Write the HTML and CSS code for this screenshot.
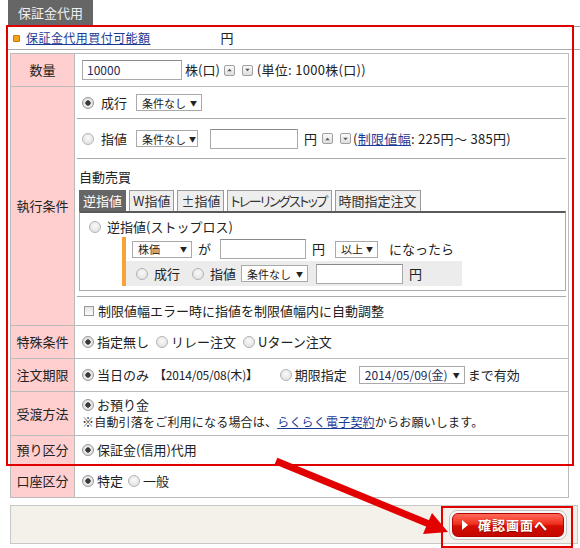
FILE: index.html
```html
<!DOCTYPE html>
<html lang="ja">
<head>
<meta charset="utf-8">
<title>保証金代用</title>
<link rel="stylesheet" href="styles.css">
</head>
<body>
<div class="page">
  <div class="tabbar"><span class="tab">保証金代用</span></div>
  <div class="panel">
    <div class="avail">
      <span class="bullet"></span><a href="#" class="link avail-link">保証金代用買付可能額</a><span class="avail-yen">円</span>
    </div>
    <table class="form">
      <tr>
        <th>数量</th>
        <td>
          <div class="line h32">
            <span class="input qty">10000</span><span class="unit">株(口)</span>
            <span class="spin sp1"><svg viewBox="0 0 10 10" width="10" height="10"><path d="M2.5 6.5 L5 3.5 L7.5 6.5Z" fill="#555"/></svg></span>
            <span class="spin sp2"><svg viewBox="0 0 10 10" width="10" height="10"><path d="M2.5 3.5 L5 6.5 L7.5 3.5Z" fill="#555"/></svg></span>
            <span class="note-unit">(単位: 1000株(口))</span>
          </div>
        </td>
      </tr>
      <tr>
        <th>執行条件</th>
        <td class="exec">
          <div class="erow e1">
            <span class="radio on"></span><span class="rlabel">成行</span>
            <span class="sel s-cond">条件なし<i>▼</i></span>
          </div>
          <div class="erow e2">
            <span class="radio"></span><span class="rlabel">指値</span>
            <span class="sel s-cond2">条件なし<i>▼</i></span>
            <span class="input price"></span><span class="yen">円</span>
            <span class="spin sp3"><svg viewBox="0 0 10 10" width="10" height="10"><path d="M2.5 6.5 L5 3.5 L7.5 6.5Z" fill="#555"/></svg></span>
            <span class="spin sp2"><svg viewBox="0 0 10 10" width="10" height="10"><path d="M2.5 3.5 L5 6.5 L7.5 3.5Z" fill="#555"/></svg></span>
            <span class="range">(<a href="#" class="link">制限値幅</a>: 225円～ 385円)</span>
          </div>
          <div class="auto">
            <div class="auto-title">自動売買</div>
            <div class="stabs">
              <span class="stab active">逆指値</span>
              <span class="stab">W指値</span>
              <span class="stab">±指値</span>
              <span class="stab trail">トレーリングストップ</span>
              <span class="stab">時間指定注文</span>
            </div>
            <div class="tabbox">
              <div class="stop"><span class="radio"></span><span class="stop-label">逆指値(ストップロス)</span></div>
              <div class="cond">
                <div class="cond-r1">
                  <span class="sel s-kabu">株価<i>▼</i></span>
                  <span class="ga">が</span>
                  <span class="input trig"></span>
                  <span class="yen2">円</span>
                  <span class="sel s-ijo">以上<i>▼</i></span>
                  <span class="natta">になったら</span>
                </div>
                <div class="cond-r2">
                  <span class="radio"></span><span class="rl2">成行</span>
                  <span class="radio r2b"></span><span class="rl2">指値</span>
                  <span class="sel s-cond3">条件なし<i>▼</i></span>
                  <span class="input lim"></span>
                  <span class="yen3">円</span>
                </div>
              </div>
            </div>
          </div>
          <div class="erow e4">
            <span class="check"></span><span class="chk-label">制限値幅エラー時に指値を制限値幅内に自動調整</span>
          </div>
        </td>
      </tr>
      <tr>
        <th>特殊条件</th>
        <td>
          <div class="line h32">
            <span class="radio on"></span><span class="lbl">指定無し</span>
            <span class="radio gap"></span><span class="lbl">リレー注文</span>
            <span class="radio gap"></span><span class="lbl">Uターン注文</span>
          </div>
        </td>
      </tr>
      <tr>
        <th>注文期限</th>
        <td>
          <div class="line h32">
            <span class="radio on"></span><span class="lbl">当日のみ</span>
            <span class="today">【2014/05/08(木)】</span>
            <span class="radio gap2"></span><span class="lbl">期限指定</span>
            <span class="sel s-date">2014/05/09(金)<i>▼</i></span>
            <span class="until">まで有効</span>
          </div>
        </td>
      </tr>
      <tr>
        <th>受渡方法</th>
        <td>
          <div class="stack h43">
            <div class="line"><span class="radio on"></span><span class="lbl">お預り金</span></div>
            <div class="memo">※自動引落をご利用になる場合は、<a href="#" class="link">らくらく電子契約</a>からお願いします。</div>
          </div>
        </td>
      </tr>
      <tr>
        <th>預り区分</th>
        <td>
          <div class="line h28"><span class="radio on"></span><span class="lbl">保証金(信用)代用</span></div>
        </td>
      </tr>
      <tr>
        <th>口座区分</th>
        <td>
          <div class="line h32">
            <span class="radio on"></span><span class="lbl">特定</span>
            <span class="radio gap3"></span><span class="lbl">一般</span>
          </div>
        </td>
      </tr>
    </table>
    <div class="footer">
      <a href="#" class="confirm"><span class="confirm-inner"><span class="tri"></span><span class="confirm-text">確認画面へ</span></span></a>
    </div>
  </div>

  <div class="annot annot-main"></div>
  <div class="annot annot-btn"></div>
  <svg class="arrow" viewBox="0 0 580 548" width="580" height="548">
    <line x1="276" y1="461" x2="429" y2="524" stroke="#e30000" stroke-width="7"/>
    <polygon points="448,532 423,534 432,513" fill="#e30000"/>
  </svg>
</div>
</body>
</html>
```

FILE: styles.css
```css
* { box-sizing: border-box; }
html, body { margin: 0; padding: 0; background: #fff; }
body {
  font-family: "Noto Sans CJK JP", "Noto Sans", sans-serif;
  font-size: 13px;
  line-height: 18px;
  color: #222;
}
.page { position: relative; width: 580px; height: 548px; overflow: hidden; }

.tabbar { padding-left: 8px; height: 26px; display: flex; }
.tab {
  background: #666; color: #f0f0f0; width: 85px; height: 26px;
  display: flex; align-items: center; justify-content: center; font-size: 13px;
}
.panel { border-top: 1px solid #999; margin-left: 8px; }
.avail {
  height: 23px; display: flex; align-items: center;
  border-bottom: 1px solid #aaa; padding-left: 5px;
}
.bullet {
  width: 7px; height: 7px; background: #f7a21b; border: 1px solid #c9780a;
  border-radius: 1px; margin-right: 6px;
}
.link { color: #1b3a96; text-decoration: underline; }
.avail-link { font-size: 12px; letter-spacing: .45px; }
.avail-yen { margin-left: 70px; }

.form { border-collapse: collapse; margin: 3px 0 0 2px; width: 559px; }
.form th, .form td { border: 1px solid #bbb; padding: 0; vertical-align: middle; }
.form th { width: 64px; background: #ffcfcf; font-weight: normal; text-align: center; color: #222; }
.form td { padding-left: 7px; }
.form td.exec { padding: 0 2px; }

.line { display: flex; align-items: center; white-space: nowrap; }
.h32 { height: 32px; }
.h28 { height: 28px; }
.h43 { height: 43px; }
.stack { display: flex; flex-direction: column; justify-content: center; }
.stack .line { height: 17px; }
.memo { font-size: 12px; margin-top: 0; letter-spacing: .2px; white-space: nowrap; }

.radio {
  display: inline-block; width: 12px; height: 12px; border-radius: 50%;
  border: 1px solid #b4b4b4;
  background: radial-gradient(circle at 50% 40%, #fafafa 0, #dcdcdc 100%);
  flex: none;
}
.radio.on { background: radial-gradient(circle, #3a3a3a 0 2.4px, #e8e8e8 2.9px, #d8d8d8 100%); border-color: #9a9a9a; }
.check {
  display: inline-block; width: 10px; height: 10px; border: 1px solid #999;
  background: linear-gradient(#e6e6e6, #fafafa); flex: none;
}
.lbl { margin-left: 3px; }
.radio.gap { margin-left: 7px; }
.radio.gap2 { margin-left: 22px; }
.radio.gap3 { margin-left: 5px; }
.today { margin-left: 5px; font-size: 12px; letter-spacing: -.2px; }
.until { margin-left: 3px; }

.input {
  display: inline-flex; align-items: center; height: 20px; background: #fff;
  border: 1px solid #a9a9a9; border-top-color: #8a8a8a; padding-left: 4px;
  font-size: 12px; color: #1d2a5a; flex: none;
}
.qty { width: 100px; }
.unit { margin-left: 3px; }
.spin {
  display: inline-flex; align-items: center; justify-content: center;
  width: 11px; height: 11px; border: 1px solid #a0a0a0; border-radius: 2px;
  background: linear-gradient(#fafafa, #dedede); flex: none;
}
.spin svg { display: block; }
.sp1 { margin-left: 4px; }
.sp2 { margin-left: 7px; }
.sp3 { margin-left: 5px; }
.note-unit { margin-left: 4px; font-size: 13px; letter-spacing: .3px; }

.sel {
  display: inline-flex; align-items: center; justify-content: space-between;
  height: 17px; border: 1px solid #a9a9a9; background: #fff; padding: 0 4px 0 5px;
  font-size: 11px; color: #222; flex: none; white-space: nowrap;
}
.sel i { font-style: normal; font-size: 7px; margin-left: 3px; color: #222; }

.erow { border-bottom: 1px solid #aaa; display: flex; align-items: center; padding-left: 5px; white-space: nowrap; }
.e1 { height: 32px; }
.e2 { height: 40px; }
.e4 { height: 28px; border-bottom: 0; padding-left: 7px; }
.rlabel { margin-left: 7px; }
.s-cond { margin-left: 9px; width: 66px; }
.s-cond2 { margin-left: 9px; width: 62px; }
.price { width: 88px; margin-left: 12px; }
.yen { margin-left: 6px; }
.range { margin-left: 2px; font-size: 13px; letter-spacing: .3px; }
.chk-label { margin-left: 4px; }

.auto { border-bottom: 1px solid #aaa; padding: 9px 0 5px 2px; }
.auto-title { height: 18px; }
.stabs { display: flex; gap: 3px; margin-top: 4px; white-space: nowrap; }
.stab {
  height: 21px; border: 1px solid #9a9a9a; border-bottom: 0; background: #eee;
  padding: 0 3px; display: flex; align-items: center; color: #333;
}
.stab.active { background: #666; color: #fff; border-color: #666; }
.stab.trail { font-feature-settings: "palt"; letter-spacing: -1.6px; padding: 0 4px 0 2px; }
.tabbox {
  width: 487px; height: 80px; border: 1px solid #aaa; border-top: 2px solid #5a5a5a;
}
.stop { display: flex; align-items: center; padding: 5px 0 0 9px; height: 23px; white-space: nowrap; }
.stop-label { margin-left: 6px; }
.cond { margin: 1px 0 0 42px; border-left: 4px solid #f7a33a; width: 340px; }
.cond-r1 { height: 24px; display: flex; align-items: center; padding-left: 6px; white-space: nowrap; }
.cond-r2 { height: 25px; display: flex; align-items: center; padding-left: 10px; background: #ececec; white-space: nowrap; }
.s-kabu { width: 60px; }
.ga { margin-left: 6px; }
.trig { width: 86px; margin-left: 9px; }
.yen2 { margin-left: 6px; }
.s-ijo { margin-left: 10px; width: 43px; }
.natta { margin-left: 11px; }
.rl2 { margin-left: 6px; }
.r2b { margin-left: 12px; }
.s-cond3 { margin-left: 5px; width: 67px; }
.lim { width: 87px; margin-left: 8px; }
.yen3 { margin-left: 6px; }

.s-date { width: 106px; height: 18px; margin-left: 12px; font-size: 12px; color: #1d2a5a; }

.footer {
  margin: 7px 0 0 2px; width: 568px; height: 39px;
  background: #f4f1ea; border: 1px solid #c8c8c8;
  display: flex; justify-content: flex-end; align-items: flex-start;
  padding: 4px 10px 0 0;
}
.confirm {
  display: flex; padding: 2px; border: 1px solid #c4c4c4; border-radius: 8px;
  background: #f6f6f6; text-decoration: none;
}
.confirm-inner {
  width: 112px; height: 24px; border-radius: 6px; border: 1px solid #b30000;
  background: linear-gradient(#ff6a5a 0%, #f0301f 45%, #d40d00 55%, #c40800 100%);
  display: flex; align-items: center; padding-left: 9px;
}
.tri {
  width: 0; height: 0; border-left: 6px solid #fff;
  border-top: 5px solid transparent; border-bottom: 5px solid transparent;
}
.confirm-text {
  margin-left: 10px; color: #fff; font-weight: bold; font-size: 13px;
  letter-spacing: 1px; text-shadow: 0 1px 1px #8a0000; white-space: nowrap;
}

.annot { position: absolute; border: 2px solid #e00000; pointer-events: none; }
.annot-main { left: 6px; top: 25px; width: 568px; height: 441px; }
.annot-btn { left: 441px; top: 506px; width: 132px; height: 42px; }
.arrow { position: absolute; left: 0; top: 0; pointer-events: none; }
```
